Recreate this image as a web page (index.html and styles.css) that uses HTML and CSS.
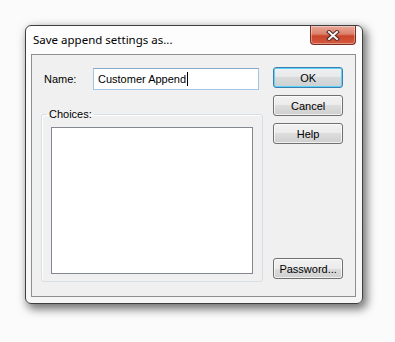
FILE: index.html
```html
<!DOCTYPE html>
<html>
<head>
<meta charset="utf-8">
<link rel="stylesheet" href="styles.css">
</head>
<body>
<div class="window">
  <div class="titlebar">
    <span class="title">Save append settings as...</span>
    <div class="close">
      <svg width="14" height="11" viewBox="0 0 14 11">
        <path d="M3 2 L11 9 M11 2 L3 9" stroke="#4b2a24" stroke-width="4" stroke-linecap="square" fill="none"/>
        <path d="M3 2 L11 9 M11 2 L3 9" stroke="#f4f4f4" stroke-width="2" stroke-linecap="square" fill="none"/>
      </svg>
    </div>
  </div>
  <div class="client">
    <div class="left">
      <div class="namerow">
        <span class="label">Name:</span>
        <div class="input">Customer Append<span class="caret"></span></div>
      </div>
      <fieldset class="group">
        <legend>Choices:</legend>
        <div class="listbox"></div>
      </fieldset>
    </div>
    <div class="buttons">
      <div class="btn default">OK</div>
      <div class="btn">Cancel</div>
      <div class="btn">Help</div>
      <div class="spacer"></div>
      <div class="btn">Password...</div>
    </div>
  </div>
</div>
</body>
</html>
```

FILE: styles.css
```css
html, body {
  margin: 0;
  padding: 0;
  background: #fbfbfb;
}
body {
  width: 395px;
  height: 342px;
  overflow: hidden;
  font-family: "Liberation Sans", Arial, sans-serif;
  font-size: 11px;
  color: #000;
}
.window {
  margin: 25px 0 0 25px;
  width: 336px;
  height: 277px;
  border: 1px solid #3f3f3f;
  border-radius: 6px;
  background: linear-gradient(#fdfdfd, #f6f6f6);
  box-shadow: 3px 4px 10px 1px rgba(0,0,0,0.55);
  display: flex;
  flex-direction: column;
}
.titlebar {
  height: 28px;
  display: flex;
  align-items: flex-start;
}
.title {
  font-family: "Noto Sans", "Open Sans", sans-serif;
  font-size: 11.5px;
  margin: 6px 0 0 7px;
  color: #000;
}
.close {
  margin-left: auto;
  margin-right: 6px;
  width: 44px;
  height: 18px;
  border: 1px solid #7a2e22;
  border-top: none;
  border-radius: 0 0 4px 4px;
  background: linear-gradient(#e9a99a 0%, #dc7f69 45%, #c9452b 55%, #d45a3f 100%);
  box-shadow: inset 0 0 0 1px rgba(255,255,255,0.35);
  display: flex;
  align-items: center;
  justify-content: center;
}
.client {
  flex: 1;
  margin: 0 6px 6px 5px;
  border: 1px solid #8e8f8f;
  background: #f0f0f0;
  display: flex;
  padding: 12px 12px 0 9px;
}
.left {
  width: 223px;
  margin-top: 1px;
  display: flex;
  flex-direction: column;
}
.namerow {
  display: flex;
  align-items: center;
  height: 22px;
  padding-left: 3px;
}
.label {
  width: 49px;
}
.input {
  width: 160px;
  height: 20px;
  border: 1px solid #a4c5e3;
  border-top-color: #86a8c8;
  background: #fff;
  padding-left: 4px;
  line-height: 20px;
  display: flex;
  align-items: center;
}
.caret {
  display: inline-block;
  width: 1px;
  height: 14px;
  background: #000;
  margin-left: 1px;
}
.group {
  margin: 17px 0 0 0;
  padding: 6px 9px 7px 9px;
  border: 1px solid #d5dfe5;
  border-radius: 3px;
  box-shadow: inset 1px 1px 0 #fff;
  min-width: 0;
}
.group legend {
  padding: 0 2px;
  margin-left: -4px;
  line-height: 14px;
  color: #000;
}
.listbox {
  height: 145px;
  border: 1px solid #828790;
  background: #fff;
}
.buttons {
  margin-left: 10px;
  width: 70px;
  display: flex;
  flex-direction: column;
  gap: 7px;
  padding-bottom: 17px;
}
.spacer {
  flex: 1;
}
.btn {
  height: 19px;
  border: 1px solid #707070;
  border-radius: 3px;
  background: linear-gradient(#f2f2f2 0%, #ebebeb 50%, #dddddd 50%, #cfcfcf 100%);
  box-shadow: inset 0 0 0 1px rgba(255,255,255,0.7);
  display: flex;
  align-items: center;
  justify-content: center;
  color: #000;
}
.btn.default {
  border-color: #3c7fb1;
  box-shadow: inset 0 0 0 1px #5fd3f7;
  background: linear-gradient(#eef0f1 0%, #e6e8e9 50%, #d8dadb 50%, #cdd1d3 100%);
}
```
